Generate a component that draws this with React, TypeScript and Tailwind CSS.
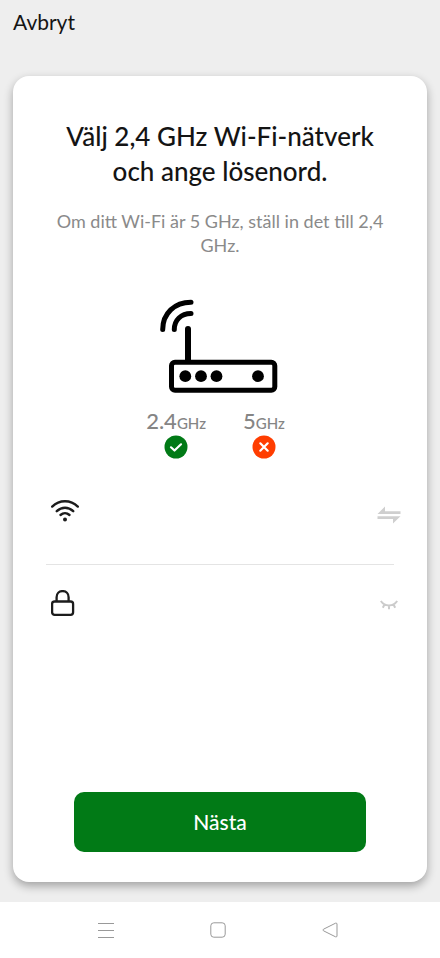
function RouterIcon() {
  return (
    <svg viewBox="0 0 118 94" className="h-[94px] w-[118px]" fill="none" stroke="#000" aria-hidden="true">
      <path d="M2.700 30.500C2.700 14.500 14.500 3.200 31 3.200" strokeWidth="5" strokeLinecap="round" />
      <path d="M14.300 30.500C14.300 21 21 14.500 31 14.500" strokeWidth="5" strokeLinecap="round" />
      <path d="M28 30V62" strokeWidth="6" strokeLinecap="round" />
      <rect x="11.500" y="63.300" width="103.300" height="28" rx="3.500" strokeWidth="5" />
      <g fill="#000" stroke="none">
        <circle cx="25.300" cy="77.200" r="5.900" />
        <circle cx="41" cy="77.200" r="5.900" />
        <circle cx="56.500" cy="77.200" r="5.900" />
        <circle cx="98" cy="77.200" r="5.900" />
      </g>
    </svg>
  );
}

function Band({ value, supported }: { value: string; supported: boolean }) {
  return (
    <div className="flex flex-col items-center">
      <p className="text-[22px] leading-6 font-medium text-[#858585]">
        {value}
        <span className="text-[15px]">GHz</span>
      </p>
      <svg
        viewBox="0 0 24 24"
        className="h-6 w-6"
        fill="none"
        stroke="#fff"
        strokeWidth="2.200"
        strokeLinecap="round"
        strokeLinejoin="round"
        role="img"
        aria-label={supported ? "OK" : "Ej OK"}
      >
        <circle cx="12" cy="12" r="11.500" fill={supported ? "#017a16" : "#ff3d00"} stroke="none" />
        {supported ? <path d="M7 12.300L10.500 15.500L17 9.300" /> : <path d="M8.300 8.300L15.700 15.700M15.700 8.300L8.300 15.700" />}
      </svg>
    </div>
  );
}

function WifiIcon() {
  return (
    <svg viewBox="0 0 28 22" className="h-[22px] w-7 shrink-0" fill="none" stroke="#1c1c1c" strokeWidth="2.400" strokeLinecap="round" aria-hidden="true">
      <path d="M1.200 6.600C8.500-.5 19.500-.5 26.800 6.600" />
      <path d="M5.800 11.200C10.500 6.500 17.500 6.500 22.200 11.200" />
      <path d="M9.500 15C12.200 12.600 15.800 12.600 18.500 15" />
      <circle cx="14" cy="19.500" r="2" fill="#1c1c1c" stroke="none" />
    </svg>
  );
}

function LockIcon() {
  return (
    <svg viewBox="0 0 24 26" className="mr-1 h-[26px] w-6 shrink-0" fill="none" stroke="#1c1c1c" strokeWidth="2.300" aria-hidden="true">
      <rect x="1.100" y="11.500" width="21" height="13.300" rx="2.500" />
      <path d="M5.600 11.500V7.200C5.600 3.500 8.100 1.100 11.600 1.100S17.600 3.500 17.600 7.200V11.500" />
    </svg>
  );
}

export default function App() {
  return (
    <div className="flex min-h-screen flex-col bg-[#eeeeee] font-[Lato,'Noto_Sans',sans-serif] text-[#141414]">
      <header className="px-[13px] pt-2 pb-10">
        <button type="button" className="block text-[21px] leading-7">
          Avbryt
        </button>
      </header>

      <main className="mx-[13px] mb-5 flex flex-1 flex-col rounded-2xl bg-white px-[33px] pt-[43px] pb-[30px] shadow-[0_4px_10px_rgba(0,0,0,0.32)]">
        <h1 className="text-center text-[26px] leading-[35px] font-medium">
          Välj 2,4 GHz Wi-Fi-nätverk
          <br />
          och ange lösenord.
        </h1>
        <p className="mt-5 text-center text-lg leading-6 text-[#8a8a8a]">
          Om ditt Wi-Fi är 5 GHz, ställ in det till 2,4
          <br />
          GHz.
        </p>

        <div className="mt-[42px] flex justify-center pr-0.5">
          <RouterIcon />
        </div>
        <div className="mt-4 flex justify-center gap-[37px] pr-[9px]">
          <Band value="2.4" supported />
          <Band value="5" supported={false} />
        </div>

        <form className="flex flex-1 flex-col">
          <div className="mt-[30px] -mr-2 flex h-11 items-center pl-[5px]">
            <WifiIcon />
            <input type="text" aria-label="Wi-Fi-nätverk" className="min-w-0 flex-1 px-4 text-lg outline-none" />
            <button type="button" aria-label="Byt nätverk" className="pt-2 pr-px">
              <svg viewBox="0 0 24 18" className="h-[18px] w-6" fill="#cfcfcf" aria-hidden="true">
                <path d="M.5 8L8 .5V5.300H23.500V8ZM23.500 10.300L16 17.500V13H.5V10.300Z" />
              </svg>
            </button>
          </div>
          <div className="mt-[31px] h-px bg-[#e4e4e4]" />
          <div className="mt-4 -mr-2 flex h-11 items-center pl-[5px]">
            <LockIcon />
            <input type="password" aria-label="Lösenord" className="min-w-0 flex-1 px-4 text-lg outline-none" />
            <button type="button" aria-label="Visa lösenord" className="pt-1 pr-1">
              <svg viewBox="0 0 18 10" className="h-[10px] w-[18px]" fill="none" stroke="#cbcbcb" strokeWidth="2" aria-hidden="true">
                <path d="M.8 1C5 7 13 7 17.200 1M9 5.500V9.200M4.500 4.500L2.800 7.800M13.500 4.500L15.200 7.800" />
              </svg>
            </button>
          </div>
          <button type="button" className="mx-7 mt-auto h-[60px] rounded-[10px] bg-[#017a16] text-[21px] font-medium text-white">
            Nästa
          </button>
        </form>
      </main>

      <nav className="flex h-14 items-center justify-center gap-24 bg-white pr-[5px]" aria-label="System">
        <button type="button" aria-label="Senaste appar">
          <svg viewBox="0 0 16 16" className="h-4 w-4" fill="none" stroke="#999" aria-hidden="true">
            <path d="M0 1.500H16M0 8.500H16M0 15.500H16" />
          </svg>
        </button>
        <button type="button" aria-label="Hem">
          <svg viewBox="0 0 16 16" className="h-4 w-4" fill="none" stroke="#999" aria-hidden="true">
            <rect x=".8" y=".8" width="14.400" height="14.400" rx="3" />
          </svg>
        </button>
        <button type="button" aria-label="Tillbaka">
          <svg viewBox="0 0 16 16" className="h-4 w-4" fill="none" stroke="#999" strokeLinejoin="round" aria-hidden="true">
            <path d="M1.500 7.200L13.500 1.200Q15 .8 15 2V14Q15 15.200 13.500 14.800L1.500 8.800Q.2 8 1.500 7.200Z" />
          </svg>
        </button>
      </nav>
    </div>
  );
}
